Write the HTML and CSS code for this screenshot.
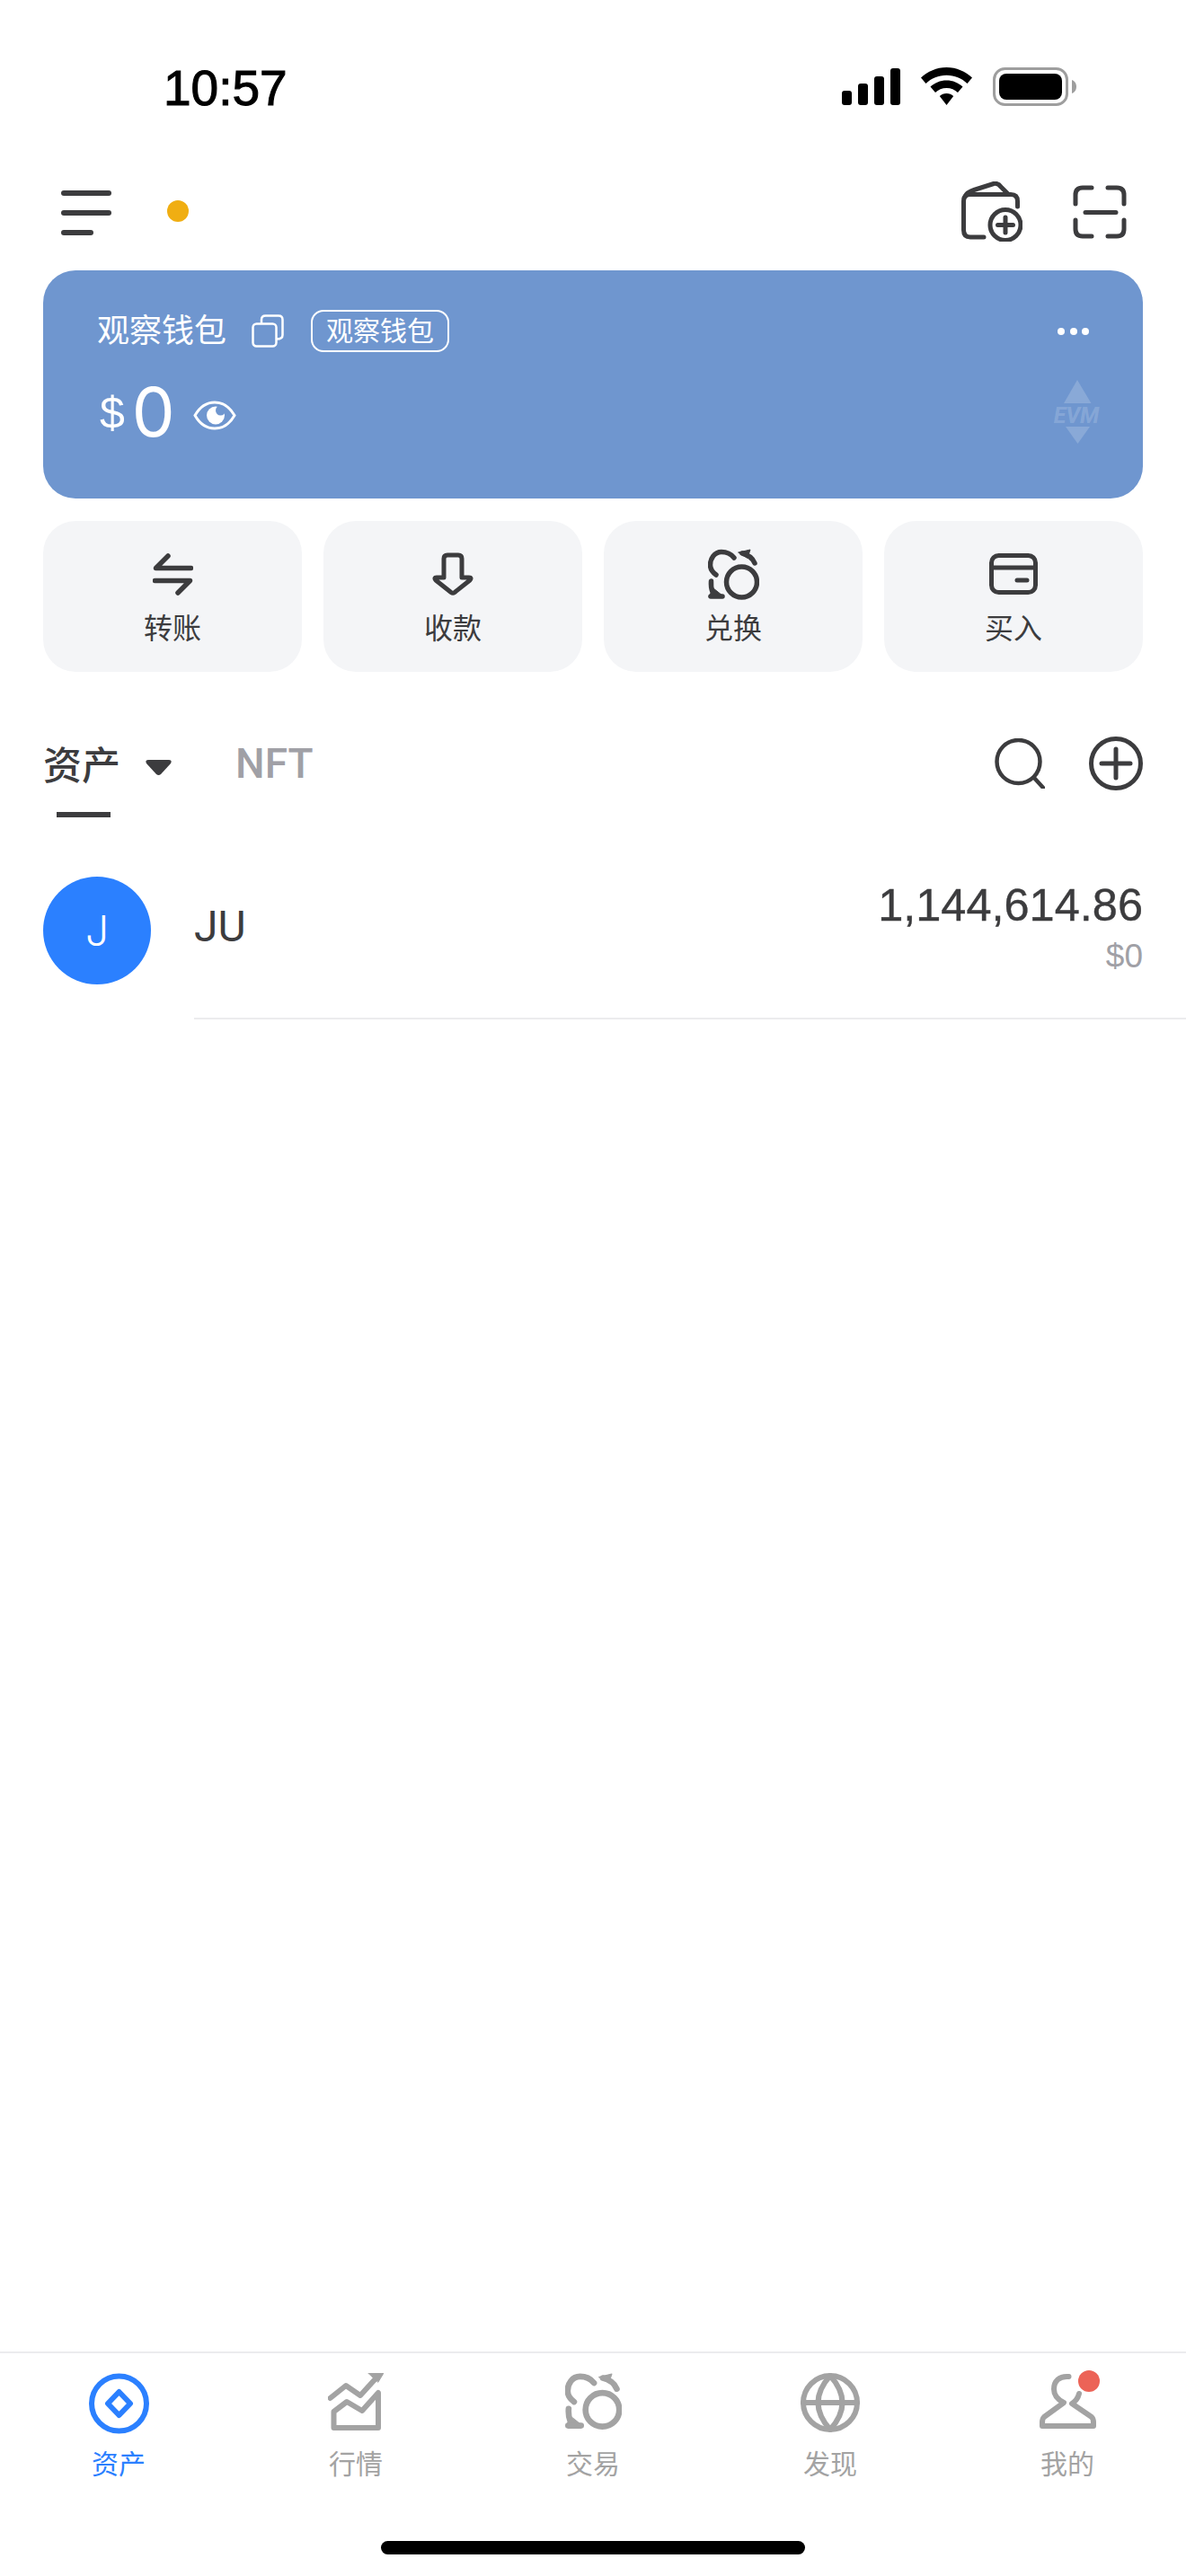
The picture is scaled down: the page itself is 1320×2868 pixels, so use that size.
FILE: index.html
```html
<!DOCTYPE html>
<html lang="zh-CN">
<head>
<meta charset="utf-8">
<title>钱包</title>
<link rel="stylesheet" href="styles.css">
</head>
<body>
<div class="page">
  <div class="status">
    <div class="time">10:57</div>
    <div class="status-icons">
      <svg class="signal" width="65" height="41" viewBox="0 0 65 41"><rect x="0" y="25" width="11" height="16" rx="3"/><rect x="18" y="17" width="11" height="24" rx="3"/><rect x="36" y="9" width="11" height="32" rx="3"/><rect x="54" y="0" width="11" height="41" rx="3"/></svg>
      <svg class="wifi" width="57" height="42" viewBox="0 0 57 42"><path d="M28.5 0C39.5 0 49.5 4.500 57 11.500L51.500 18C45.500 12.300 37.500 8.800 28.500 8.800C19.500 8.800 11.500 12.300 5.500 18L0 11.500C7.500 4.500 17.500 0 28.500 0Z"/><path d="M28.500 14.500C35.500 14.500 41.800 17.200 46.500 21.600L41 28C37.700 24.900 33.300 23 28.500 23C23.700 23 19.300 24.900 16 28L10.500 21.600C15.200 17.200 21.500 14.500 28.500 14.500Z"/><path d="M28.500 29C31.500 29 34.200 30.100 36.200 32L28.500 42L20.800 32C22.800 30.100 25.500 29 28.500 29Z"/></svg>
      <svg class="battery" width="93" height="43" viewBox="0 0 93 43"><rect x="1.500" y="1.500" width="81" height="40" rx="12" fill="none" stroke="#9e9e9e" stroke-width="3"/><rect x="7" y="7" width="70" height="29" rx="8" fill="#000"/><path d="M88 14C91 15 93 18 93 21.500C93 25 91 28 88 29Z" fill="#9e9e9e"/></svg>
    </div>
  </div>

  <div class="topbar">
    <div class="menu"><span class="menu-bar"></span><span class="menu-bar"></span><span class="menu-bar short"></span></div>
    <span class="net-dot"></span>
    <div class="top-actions">
      <svg class="ico" width="68" height="67" viewBox="0 0 68 67"><path d="M62.500 28V22Q62.500 14.500 55 14.500H10Q2.500 14.500 2.500 22V54Q2.500 62 10 62H25"/><path d="M4 17Q6 12 14 9.500L36 2.500Q41 1.500 44 6L52 14"/><circle cx="49" cy="48.500" r="17"/><path d="M49 40V57M40.500 48.500H57.500"/></svg>
      <svg class="ico" width="60" height="60" viewBox="0 0 60 60"><path d="M3 21V11Q3 3 11 3H21M39 3H49Q57 3 57 11V21M3 39V49Q3 57 11 57H21M39 57H49Q57 57 57 49V39M14 30.500H48"/></svg>
    </div>
  </div>

  <div class="card">
    <div class="card-row">
      <span class="wallet-name">观察钱包</span>
      <svg class="copy" width="36" height="37" viewBox="0 0 36 37"><rect x="1.500" y="10.500" width="26" height="25" rx="4"/><path d="M11 10V6Q11 1.500 15.500 1.500H30Q34.500 1.500 34.500 6V23Q34.500 27.500 28 27.500"/></svg>
      <span class="badge">观察钱包</span>
      <span class="more"><i></i><i></i><i></i></span>
    </div>
    <div class="balance">
      <span class="currency">$</span>
      <span class="amount-big">0</span>
      <svg class="eye" width="48" height="33" viewBox="0 0 48 33"><path d="M2 16.500C8 6 16 2 24 2C32 2 40 6 46 16.500C40 27 32 31 24 31C16 31 8 27 2 16.500Z" fill="none" stroke="#fff" stroke-width="3"/><circle cx="25" cy="16.500" r="10" fill="#fff"/><circle cx="30.500" cy="11" r="5.500" fill="#6f96cf"/></svg>
    </div>
    <svg class="evm" width="54" height="71" viewBox="0 0 54 71"><path d="M28 0L43.500 26H13Z"/><path d="M15 52H42L28.500 71Z"/><text x="27" y="48" text-anchor="middle" class="evm-text">EVM</text></svg>
  </div>

  <div class="actions">
    <div class="action">
      <div class="action-icon"><svg class="ico thick" width="45" height="47" viewBox="0 0 45 47"><path d="M42.500 16.500H3.500L17 3M2.500 30.500H41.500L28 44"/></svg></div>
      <span>转账</span>
    </div>
    <div class="action">
      <div class="action-icon"><svg class="ico" width="46" height="48" viewBox="0 0 46 48"><path d="M13 28V7Q13 3 17 3H29Q33 3 33 7V28H41Q44.500 28 42 31L25 44.500Q23 46 21 44.500L4 31Q1.500 28 5 28Z"/></svg></div>
      <span>收款</span>
    </div>
    <div class="action">
      <div class="action-icon"><svg class="ico thick" width="57" height="57" viewBox="0 0 57 57"><circle cx="37.500" cy="37" r="17"/><path d="M29 10C25 5 20 3.500 15 3.500C7 3.500 2.500 11 2.500 18C2.500 22 5 26 9 29"/><path d="M52 16C50 11 46 7 38 5"/><path class="solid" d="M34 4L47 1L44 10Z"/><path d="M3.500 36Q3 43 5 48"/><path class="solid" d="M1 53L6 44L16 52Z"/><path d="M3 53H16"/></svg></div>
      <span>兑换</span>
    </div>
    <div class="action">
      <div class="action-icon"><svg class="ico" width="54" height="46" viewBox="0 0 54 46"><rect x="2.500" y="2.500" width="49" height="41" rx="8"/><path d="M2.500 16H51.500M31 30H42"/></svg></div>
      <span>买入</span>
    </div>
  </div>

  <div class="tabs">
    <span class="tab-active">资产</span>
    <svg class="caret" width="29" height="18" viewBox="0 0 29 18"><path d="M3 0H26Q30 0 28 4L17 16Q14.500 18 12 16L1 4Q-1 0 3 0Z"/></svg>
    <span class="tab-nft">NFT</span>
    <div class="tab-tools">
      <svg class="ico thin" width="56" height="56" viewBox="0 0 56 56"><circle cx="26.500" cy="26" r="24"/><path d="M44 44L54 55"/></svg>
      <svg class="ico" width="60" height="60" viewBox="0 0 60 60"><circle cx="30" cy="30" r="27.500"/><path d="M30 14V46M14 30H46"/></svg>
    </div>
  </div>
  <div class="tab-underline"></div>

  <div class="token">
    <div class="token-logo">J</div>
    <div class="token-name">JU</div>
    <div class="token-values">
      <div class="token-amount">1,144,614.86</div>
      <div class="token-usd">$0</div>
    </div>
  </div>
  <div class="divider"></div>

  <div class="tabbar">
    <div class="nav">
      <div class="nav-item active">
        <div class="nav-icon"><svg width="67" height="68" viewBox="0 0 67 68"><circle cx="33.500" cy="34" r="30.500"/><path d="M33.500 21L46 34L33.500 47L21 34Z"/></svg></div>
        <span>资产</span>
      </div>
      <div class="nav-item">
        <div class="nav-icon"><svg width="62" height="64" viewBox="0 0 62 64"><path d="M2.500 28L20 14L36 25L56 3"/><path class="solid" d="M45 0H62L56 10Z"/><path d="M6.500 43L21 32L38 42L56 22V61H6.500Z"/></svg></div>
        <span>行情</span>
      </div>
      <div class="nav-item">
        <div class="nav-icon"><svg width="63" height="63" viewBox="0 0 57 57"><circle cx="37.500" cy="37" r="17"/><path d="M29 10C25 5 20 3.500 15 3.500C7 3.500 2.500 11 2.500 18C2.500 22 5 26 9 29"/><path d="M52 16C50 11 46 7 38 5"/><path class="solid" d="M34 4L47 1L44 10Z"/><path d="M3.500 36Q3 43 5 48"/><path class="solid" d="M1 53L6 44L16 52Z"/><path d="M3 53H16"/></svg></div>
        <span>交易</span>
      </div>
      <div class="nav-item">
        <div class="nav-icon"><svg width="66" height="66" viewBox="0 0 66 66"><circle cx="33" cy="33" r="30"/><path d="M3 33H63M33 3Q6 33 33 63Q60 33 33 3Z"/></svg></div>
        <span>发现</span>
      </div>
      <div class="nav-item">
        <div class="nav-icon"><svg width="63" height="62" viewBox="0 0 63 62"><path d="M32.500 4C22 3 16 9 16 18C16 25 21 30 27 33L5 49Q3 51 3 55V59H60V55Q60 51 58 49L36 34C41 31 43 27 44 23"/></svg><span class="nav-badge"></span></div>
        <span>我的</span>
      </div>
    </div>
    <div class="home-indicator"></div>
  </div>
</div>
</body>
</html>
```

FILE: styles.css
```css
* { box-sizing: border-box; }
html, body { margin: 0; padding: 0; background: #fff; }
body { font-family: "Liberation Sans", "Noto Sans CJK SC", sans-serif; color: #3c3c3e; }
.page { width: 1320px; height: 2868px; display: flex; flex-direction: column; overflow: hidden; }

.status { height: 170px; padding: 71px 122px 0 182px; display: flex; justify-content: space-between; align-items: flex-start; }
.time { font-size: 55px; line-height: 54px; color: #000; -webkit-text-stroke: 1.1px #000; }
.status-icons { display: flex; gap: 23px; align-items: flex-start; margin-top: 4px; }
.signal { margin-top: 1px; }
.wifi path { fill: #000; }

.topbar { height: 131px; padding: 0 66px 0 68px; display: flex; align-items: center; }
.menu { width: 56px; display: flex; flex-direction: column; gap: 16px; margin-top: 3px; }
.menu-bar { display: block; height: 6px; border-radius: 3px; background: #3c3c3e; }
.menu-bar.short { width: 36px; }
.net-dot { width: 24px; height: 24px; border-radius: 50%; background: #f0ae12; margin-left: 62px; margin-top: -2px; }
.top-actions { margin-left: auto; display: flex; align-items: center; gap: 56px; }

.ico { fill: none; stroke: #3c3c3e; stroke-width: 5; stroke-linecap: round; stroke-linejoin: round; display: block; }
.ico.thick { stroke-width: 5.5; }
.ico.thin { stroke-width: 4.5; }
.ico .solid { fill: #3c3c3e; stroke: #3c3c3e; stroke-width: 1; }

.card { position: relative; margin: 0 48px; height: 254px; border-radius: 36px; background: #6f96cf; padding: 44px 60px 0; color: #fff; }
.card-row { display: flex; align-items: center; height: 47px; }
.wallet-name { font-size: 36px; line-height: 47px; }
.copy { margin-left: 28px; fill: none; stroke: #fff; stroke-width: 2.5; }
.badge { margin-left: 30px; height: 47px; padding: 0 15px; border: 2px solid #fff; border-radius: 14px; font-size: 30px; line-height: 43px; }
.more { margin-left: auto; display: flex; gap: 5.5px; }
.more i { display: block; width: 8px; height: 8px; border-radius: 50%; background: #fff; }
.balance { margin-top: 36px; height: 60px; display: flex; align-items: center; }
.currency { font-family: "Liberation Sans", sans-serif; font-size: 50px; margin-left: 3px; margin-top: 4px; }
.amount-big { font-family: Inter, sans-serif; font-weight: 400; font-size: 76px; line-height: 60px; margin-left: 8px; }
.eye { margin-left: 20px; margin-top: 8px; }
.evm { position: absolute; top: 122px; right: 47px; fill: rgba(255, 255, 255, 0.18); }
.evm-text { font-family: Roboto, sans-serif; font-size: 25px; font-weight: 700; font-style: italic; }

.actions { margin: 25px 48px 0; display: flex; gap: 24px; }
.action { flex: 1; height: 168px; border-radius: 36px; background: #f4f5f7; padding-top: 29px; display: flex; flex-direction: column; align-items: center; font-size: 32px; line-height: 40px; }
.action-icon { height: 60px; display: flex; align-items: center; justify-content: center; margin-bottom: 11px; }

.tabs { margin-top: 66px; height: 72px; padding: 0 48px; display: flex; align-items: center; }
.tab-active { font-size: 43px; font-weight: 500; margin-top: -3px; }
.caret { margin-left: 28px; margin-top: 9px; fill: #3c3c3e; }
.tab-nft { margin-left: 71px; font-family: Roboto, sans-serif; font-size: 46px; font-weight: 500; color: #a0a0a6; }
.tab-tools { margin-left: auto; display: flex; align-items: center; gap: 49px; }
.tab-underline { margin: 18px 0 0 63px; width: 60px; height: 6px; background: #3c3c3e; }

.token { margin-top: 66px; height: 120px; padding: 0 48px; display: flex; align-items: center; }
.token-logo { width: 120px; height: 120px; border-radius: 50%; background: #2b80ff; color: #fff; font-family: Inter, sans-serif; font-weight: 300; font-size: 46px; display: flex; align-items: center; justify-content: center; }
.token-name { margin: 0 0 9px 48px; font-family: Roboto, sans-serif; font-size: 48px; }
.token-values { margin-left: auto; align-self: flex-start; padding-top: 4px; display: flex; flex-direction: column; align-items: flex-end; gap: 9px; }
.token-amount { font-size: 50.5px; line-height: 56px; -webkit-text-stroke: 0.4px #3c3c3e; }
.token-usd { font-size: 37px; line-height: 40px; color: #a0a0a6; }
.divider { margin: 37px 0 0 216px; height: 2px; background: #ececee; }

.tabbar { margin-top: auto; height: 250px; border-top: 2px solid #ececee; display: flex; flex-direction: column; }
.nav { display: grid; grid-template-columns: repeat(5, 1fr); padding-top: 22px; }
.nav-item { display: flex; flex-direction: column; align-items: center; color: #a3a3a3; font-size: 30px; line-height: 36px; }
.nav-icon { position: relative; height: 68px; margin-bottom: 16px; }
.nav-icon svg { display: block; fill: none; stroke: #a3a3a3; stroke-width: 6; stroke-linecap: round; stroke-linejoin: round; }
.nav-icon .solid { fill: #a3a3a3; stroke-width: 1; }
.nav-item.active { color: #2b80ff; }
.nav-item.active svg { stroke: #2b80ff; }
.nav-badge { position: absolute; top: -3px; right: -4px; width: 24px; height: 24px; border-radius: 50%; background: #ec6357; }
.home-indicator { margin: 67px auto 0; width: 472px; height: 15px; border-radius: 8px; background: #000; }
```
